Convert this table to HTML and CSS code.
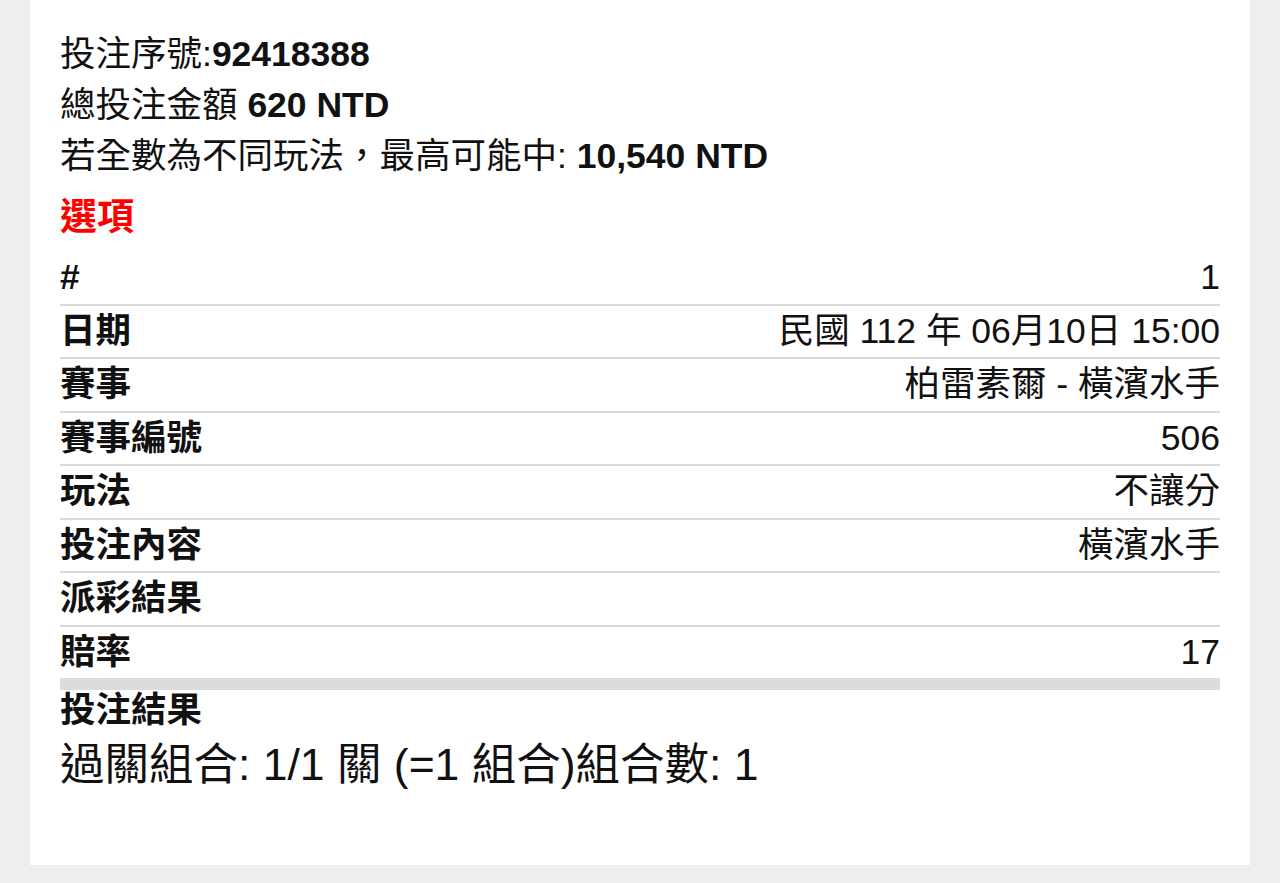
FILE: index.html
```html
<!DOCTYPE html>
<html lang="zh-Hant">
<head>
<meta charset="utf-8">
<title>投注明細</title>
<link rel="stylesheet" href="styles.css">
</head>
<body>
<div class="card">
  <div class="summary">
    <div class="line">投注序號:<b>92418388</b></div>
    <div class="line">總投注金額 <b>620 NTD</b></div>
    <div class="line">若全數為不同玩法，最高可能中: <b>10,540 NTD</b></div>
  </div>
  <h2 class="section-title">選項</h2>
  <div class="details">
    <div class="row"><span class="label">#</span><span class="value">1</span></div>
    <div class="row"><span class="label">日期</span><span class="value">民國 112 年 06月10日 15:00</span></div>
    <div class="row"><span class="label">賽事</span><span class="value">柏雷素爾 - 橫濱水手</span></div>
    <div class="row"><span class="label">賽事編號</span><span class="value">506</span></div>
    <div class="row"><span class="label">玩法</span><span class="value">不讓分</span></div>
    <div class="row"><span class="label">投注內容</span><span class="value">橫濱水手</span></div>
    <div class="row"><span class="label">派彩結果</span><span class="value"></span></div>
    <div class="row row-last"><span class="label">賠率</span><span class="value">17</span></div>
  </div>
  <div class="result-title">投注結果</div>
  <div class="combo">過關組合: 1/1 關 (=1 組合)組合數: 1</div>
</div>
</body>
</html>
```

FILE: styles.css
```css
html, body {
  margin: 0;
  padding: 0;
}

body {
  background: #eeeeee;
  font-family: "Liberation Sans", "Noto Sans CJK TC", sans-serif;
  color: #111;
  padding: 0 30px 18px;
}

.card {
  background: #fff;
  padding: 29px 30px 0;
  height: 865px;
  box-sizing: border-box;
}

.summary .line {
  font-size: 35.5px;
  line-height: 51px;
}

.summary b {
  font-weight: 700;
}

.section-title {
  margin: 10px 0 9px;
  font-size: 37px;
  line-height: 51px;
  font-weight: 700;
  color: #ff0000;
}

.details {
  display: flex;
  flex-direction: column;
}

.row {
  display: flex;
  justify-content: space-between;
  align-items: center;
  font-size: 35.5px;
  line-height: 51.5px;
  border-bottom: 2px solid #d9d9d9;
}

.row-last {
  border-bottom: 12px solid #dcdcdc;
}

.label {
  font-weight: 700;
}

.value {
  font-weight: 400;
  text-align: right;
}

.result-title {
  font-size: 35.5px;
  line-height: 40px;
  font-weight: 700;
}

.combo {
  font-size: 44.5px;
  line-height: 70px;
}
```
